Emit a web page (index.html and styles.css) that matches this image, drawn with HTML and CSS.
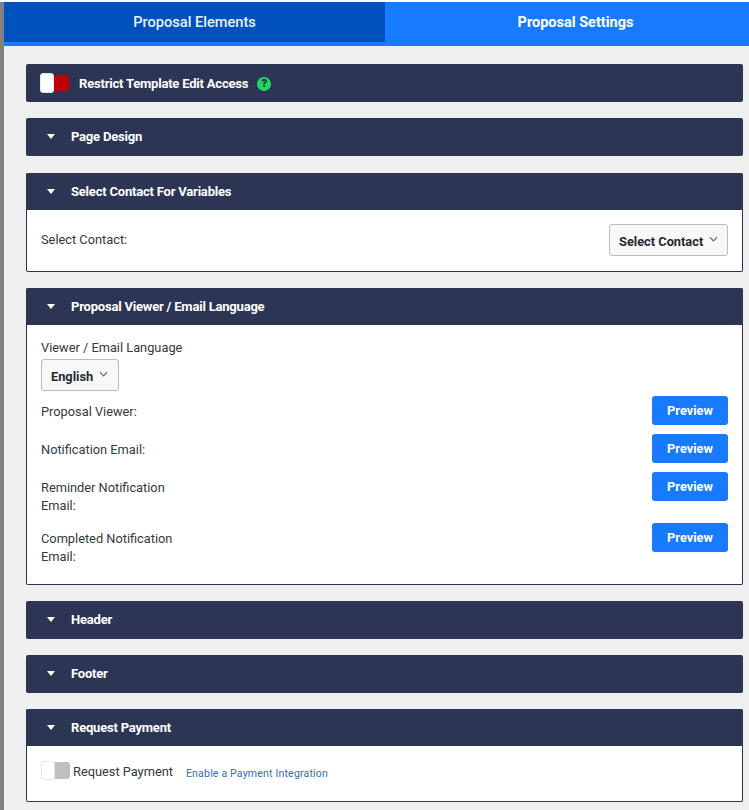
FILE: index.html
```html
<!DOCTYPE html>
<html lang="en">
<head>
<meta charset="utf-8">
<title>Proposal Settings</title>
<link rel="stylesheet" href="styles.css">
</head>
<body>
<div class="page">
  <nav class="tabs">
    <div class="tab">Proposal Elements</div>
    <div class="tab tab-active">Proposal Settings</div>
  </nav>
  <main class="content">
    <section class="panel">
      <div class="head head-toggle">
        <span class="toggle toggle-red"><span class="knob"></span></span>
        <span class="title">Restrict Template Edit Access</span>
        <span class="help">?</span>
      </div>
    </section>
    <section class="panel">
      <div class="head head-plain"><span class="caret"></span><span class="title">Page Design</span></div>
    </section>
    <section class="panel panel-contact">
      <div class="head"><span class="caret"></span><span class="title">Select Contact For Variables</span></div>
      <div class="body contact-body">
        <span class="label contact-label">Select Contact:</span>
        <button class="select">Select Contact<svg class="chev" viewBox="0 0 10 6"><path d="M1 1l4 4 4-4" fill="none" stroke="#666" stroke-width="1.3"/></svg></button>
      </div>
    </section>
    <section class="panel panel-lang">
      <div class="head"><span class="caret"></span><span class="title">Proposal Viewer / Email Language</span></div>
      <div class="body lang-body">
        <div class="label lang-label">Viewer / Email Language</div>
        <button class="select select-lang">English<svg class="chev" viewBox="0 0 10 6"><path d="M1 1l4 4 4-4" fill="none" stroke="#666" stroke-width="1.3"/></svg></button>
        <div class="row row-a"><span class="label">Proposal Viewer:</span><button class="preview">Preview</button></div>
        <div class="row row-b"><span class="label">Notification Email:</span><button class="preview">Preview</button></div>
        <div class="row row-c"><span class="label wrap">Reminder Notification Email:</span><button class="preview">Preview</button></div>
        <div class="row row-d"><span class="label wrap">Completed Notification Email:</span><button class="preview">Preview</button></div>
      </div>
    </section>
    <section class="panel">
      <div class="head head-plain"><span class="caret"></span><span class="title">Header</span></div>
    </section>
    <section class="panel">
      <div class="head head-plain"><span class="caret"></span><span class="title">Footer</span></div>
    </section>
    <section class="panel panel-pay">
      <div class="head"><span class="caret"></span><span class="title">Request Payment</span></div>
      <div class="body pay-body">
        <span class="toggle toggle-grey"><span class="knob"></span></span>
        <span class="label pay-label">Request Payment</span>
        <a class="link" href="#">Enable a Payment Integration</a>
      </div>
    </section>
  </main>
</div>
</body>
</html>
```

FILE: styles.css
```css
* { box-sizing: border-box; }
html, body { margin: 0; padding: 0; height: 100%; }
body {
  background: #fff;
  font-family: Roboto, "Liberation Sans", sans-serif;
  overflow: hidden;
}
.page {
  margin-top: 2px;
  height: 808px;
  border-left: 4px solid #808080;
  background: #efefef;
  overflow: hidden;
}
.tabs {
  display: flex;
  height: 44px;
  border-bottom: 4px solid #187bff;
}
.tab {
  flex: none;
  width: 381px;
  background: #0051bb;
  color: #e9f1ff;
  font-size: 14.6px;
  font-weight: 500;
  line-height: 40px;
  text-align: center;
}
.tab-active {
  padding-top: 1px;
  background: #187bff;
  color: #fff;
  font-size: 14.5px;
  font-weight: 700;
}
.content {
  display: flex;
  flex-direction: column;
  padding: 18px 6px 0 22px;
}
.panel {
  margin-bottom: 16px;
  border-radius: 2px;
  background: #fff;
}
.panel-contact, .panel-lang, .panel-pay {
  border: 1px solid #2d3554;
  border-top: 0;
}
.panel-contact { margin-top: 1px; }
.head {
  display: flex;
  align-items: center;
  height: 38px;
  padding-left: 21px;
  background: #2d3554;
  border-radius: 2px;
  color: #fff;
}
.head-plain { padding-bottom: 2px; }
.panel-contact .head, .panel-lang .head, .panel-pay .head {
  height: 37px;
  margin: 0 -1px;
  border-radius: 2px 2px 0 0;
}
.caret {
  flex: none;
  width: 0;
  height: 0;
  margin-right: 16px;
  border-left: 4.5px solid transparent;
  border-right: 4.5px solid transparent;
  border-top: 5px solid #fff;
}
.title {
  font-size: 13px;
  font-weight: 700;
  letter-spacing: -0.2px;
}
.head-toggle { padding-left: 14px; }
.toggle {
  display: flex;
  align-items: center;
  flex: none;
  width: 29px;
  height: 16px;
  border-radius: 3px;
}
.toggle-red { background: #c00000; margin-right: 10px; }
.toggle-grey { background: #bfbfbf; height: 17px; }
.knob {
  display: block;
  flex: none;
  width: 14px;
  height: 20px;
  background: #fff;
  border: 1px solid #e8e8e8;
  border-radius: 3px;
}
.toggle-grey .knob { height: 19px; }
.help {
  display: flex;
  align-items: center;
  justify-content: center;
  width: 14px;
  height: 14px;
  margin: 1px 0 0 9px;
  border-radius: 50%;
  background: #26d366;
  color: #12301f;
  font-size: 11px;
  font-weight: 900;
}
.label {
  font-size: 12.8px;
  line-height: 18px;
  color: #343a40;
}
.contact-body {
  display: flex;
  justify-content: space-between;
  height: 61px;
  padding: 14px 14px 0 14px;
}
.contact-label { display: block; margin-top: 7px; }
.select {
  display: flex;
  align-items: center;
  justify-content: space-between;
  height: 32px;
  padding: 2px 10px 0 9px;
  background: #f8f8f8;
  border: 1px solid #bbb;
  border-radius: 3px;
  color: #252a30;
  font-family: inherit;
  font-size: 12.8px;
  font-weight: 700;
  white-space: nowrap;
}
.contact-body .select { width: 119px; }
.chev { flex: none; width: 9px; height: 6px; margin: -4px 0 0 6px; }
.lang-body {
  height: 259px;
  padding: 14px 14px 0;
}
.lang-label { height: 18px; }
.select-lang {
  width: 78px;
  margin-top: 2px;
}
.row {
  display: flex;
  justify-content: space-between;
  align-items: flex-start;
}
.row .label { display: block; margin-top: 7px; }
.row-a { margin-top: 5px; height: 38px; }
.row-b { height: 38px; }
.row-c { height: 51px; }
.wrap { width: 140px; }
.preview {
  width: 76px;
  height: 29px;
  padding: 0;
  background: #187bff;
  border: 0;
  border-radius: 3px;
  color: #fff;
  font-family: inherit;
  font-size: 12.8px;
  font-weight: 700;
}
.pay-body {
  display: flex;
  align-items: center;
  height: 55px;
  padding: 0 0 6px 14px;
}
.pay-label { margin: 2px 0 0 3px; }
.link {
  margin: 6px 0 0 13px;
  font-size: 10.6px;
  color: #3a6cb5;
  text-decoration: none;
  letter-spacing: 0.15px;
}
```
